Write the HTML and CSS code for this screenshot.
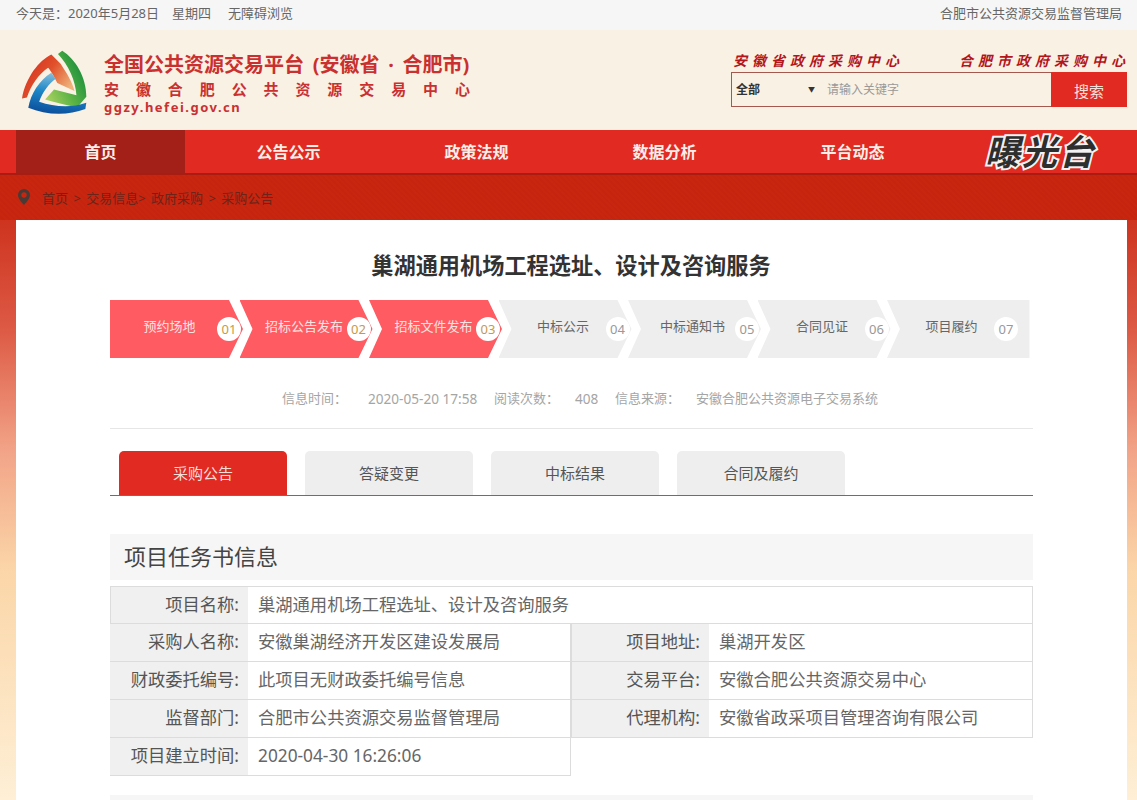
FILE: index.html
```html
<!DOCTYPE html>
<html lang="zh-CN">
<head>
    <meta charset="UTF-8">
    <title>巢湖通用机场工程选址、设计及咨询服务</title>
    <link rel="stylesheet" href="styles.css">
</head>
<body>
    <!-- Top bar -->
    <div class="top-bar">
        <div class="top-left">
            <span>今天是：2020年5月28日</span>
            <span>星期四</span>
            <span>无障碍浏览</span>
        </div>
        <div>合肥市公共资源交易监督管理局</div>
    </div>

    <!-- Header -->
    <div class="header">
        <div class="brand">
            <svg class="logo" viewBox="30 28 200 194">
                <defs>
                    <linearGradient id="redGrad" x1="0" y1="0" x2="1" y2="0.6">
                        <stop offset="0" stop-color="#d3261f"/>
                        <stop offset="0.55" stop-color="#e0502a"/>
                        <stop offset="1" stop-color="#eeb27a"/>
                    </linearGradient>
                    <linearGradient id="greenGrad" x1="0" y1="1" x2="1" y2="0.3">
                        <stop offset="0" stop-color="#b9d766"/>
                        <stop offset="0.5" stop-color="#5db445"/>
                        <stop offset="1" stop-color="#128a3c"/>
                    </linearGradient>
                    <linearGradient id="blueGrad" x1="0.6" y1="0" x2="0.4" y2="1">
                        <stop offset="0" stop-color="#8fc4df"/>
                        <stop offset="0.5" stop-color="#1c86c6"/>
                        <stop offset="1" stop-color="#0c4f9c"/>
                    </linearGradient>
                </defs>
                <path fill="url(#redGrad)" d="M122 42 L150 70 C170 100 185 125 192 152 L140 128 C128 105 120 90 112 82 C85 100 60 135 48 172 L33 175 C45 110 85 60 122 42Z"/>
                <path fill="url(#greenGrad)" d="M142 40 L155 30 C195 55 228 110 228 170 L200 202 C165 195 130 185 103 178 L130 148 L198 165 C195 120 175 75 142 40Z"/>
                <path fill="url(#blueGrad)" d="M122 97 L135 115 C115 130 95 155 85 185 C130 200 180 205 228 188 L225 207 C170 228 105 225 52 203 C60 160 85 120 122 97Z"/>
            </svg>
            <div class="brand-text">
                <div class="brand-title">全国公共资源交易平台 (安徽省 · 合肥市)</div>
                <div class="brand-sub">
                    <span>安</span><span>徽</span><span>合</span><span>肥</span><span>公</span><span>共</span><span>资</span><span>源</span><span>交</span><span>易</span><span>中</span><span>心</span>
                </div>
                <div class="brand-url">ggzy.hefei.gov.cn</div>
            </div>
        </div>
        <div class="header-right">
            <div class="centers">
                <a>安徽省政府采购中心</a>
                <a>合肥市政府采购中心</a>
            </div>
            <div class="search-box">
                <div class="search-select">全部<span class="search-arrow">▼</span></div>
                <div class="search-input">请输入关键字</div>
                <div class="search-btn">搜索</div>
            </div>
        </div>
    </div>

    <!-- Nav -->
    <div class="nav">
        <a class="nav-item active">首页</a>
        <a class="nav-item">公告公示</a>
        <a class="nav-item">政策法规</a>
        <a class="nav-item">数据分析</a>
        <a class="nav-item">平台动态</a>
        <a class="nav-item nav-exposure">曝光台</a>
    </div>

    <!-- Breadcrumb -->
    <div class="crumbs">
        <svg class="pin" viewBox="0 0 12 16">
            <path fill="#4a3a36" fill-rule="evenodd" d="M6 0a6 6 0 0 1 6 6c0 3.6-3.6 7.4-6 10C3.6 13.4 0 9.6 0 6a6 6 0 0 1 6-6zm0 3.3a2.7 2.7 0 1 0 0 5.4 2.7 2.7 0 0 0 0-5.4z"/>
        </svg>
        <span>首页 &gt; 交易信息&gt; 政府采购 &gt; 采购公告</span>
    </div>

    <!-- Main card -->
    <div class="card">
        <h1>巢湖通用机场工程选址、设计及咨询服务</h1>

        <div class="steps">
            <div class="step first done"><span class="step-name">预约场地</span><span class="step-num">01</span></div>
            <div class="step done"><span class="step-name">招标公告发布</span><span class="step-num">02</span></div>
            <div class="step done"><span class="step-name">招标文件发布</span><span class="step-num">03</span></div>
            <div class="step"><span class="step-name">中标公示</span><span class="step-num">04</span></div>
            <div class="step"><span class="step-name">中标通知书</span><span class="step-num">05</span></div>
            <div class="step"><span class="step-name">合同见证</span><span class="step-num">06</span></div>
            <div class="step last"><span class="step-name">项目履约</span><span class="step-num">07</span></div>
        </div>

        <div class="info-row">
            <span class="info-label">信息时间：</span>
            <span class="info-time">2020-05-20 17:58</span>
            <span class="info-label">阅读次数：</span>
            <span class="info-count">408</span>
            <span class="info-label">信息来源：</span>
            <span>安徽合肥公共资源电子交易系统</span>
        </div>

        <div class="tabs">
            <a class="tab active">采购公告</a>
            <a class="tab">答疑变更</a>
            <a class="tab">中标结果</a>
            <a class="tab">合同及履约</a>
        </div>

        <h2 class="section-title">项目任务书信息</h2>
        <div class="info-table">
            <div class="cell-label">项目名称:</div>
            <div class="cell-value span-3">巢湖通用机场工程选址、设计及咨询服务</div>
            <div class="cell-label">采购人名称:</div>
            <div class="cell-value">安徽巢湖经济开发区建设发展局</div>
            <div class="cell-label">项目地址:</div>
            <div class="cell-value">巢湖开发区</div>
            <div class="cell-label">财政委托编号:</div>
            <div class="cell-value">此项目无财政委托编号信息</div>
            <div class="cell-label">交易平台:</div>
            <div class="cell-value">安徽合肥公共资源交易中心</div>
            <div class="cell-label">监督部门:</div>
            <div class="cell-value">合肥市公共资源交易监督管理局</div>
            <div class="cell-label">代理机构:</div>
            <div class="cell-value">安徽省政采项目管理咨询有限公司</div>
            <div class="cell-label">项目建立时间:</div>
            <div class="cell-value">2020-04-30 16:26:06</div>
        </div>

        <div class="next-section"></div>
    </div>
</body>
</html>
```

FILE: styles.css
```css
/* Global */
html, body {
    height: 800px;
    overflow: hidden;
}

body {
    margin: 0;
    font-family: "Noto Sans", "Noto Sans CJK SC", sans-serif;
    font-size: 13px;
    color: #555;
    background: linear-gradient(180deg, #c8240f 175px, #dd5a45 330px, #f2a488 451px, #fbd6a8 571px, #feefd6 800px);
}

/* Top bar */
.top-bar {
    height: 30px;
    line-height: 27px;
    padding: 0 15px 0 16px;
    background: #f6f6f6;
    display: flex;
    justify-content: space-between;
    font-size: 13px;
    color: #666;
}

.top-left {
    display: flex;
    gap: 13px;
}

.top-left span:last-child {
    margin-left: 4px;
}

/* Header */
.header {
    height: 100px;
    background: #f9f1e4;
    display: flex;
    justify-content: space-between;
    padding: 0 10px 0 21px;
}

.brand {
    display: flex;
    gap: 17px;
    padding-top: 20px;
}

.logo {
    width: 66px;
    height: 64px;
}

.brand-text {
    width: 366px;
    color: #c9302f;
    font-weight: 700;
}

.brand-title {
    font-size: 20px;
    line-height: 28px;
    white-space: nowrap;
    word-spacing: 3.5px;
    margin-top: 1px;
}

.brand-sub {
    display: flex;
    justify-content: space-between;
    font-size: 15px;
    line-height: 18px;
    margin-top: 1px;
}

.brand-url {
    font-size: 13px;
    line-height: 16px;
    letter-spacing: 1.5px;
    margin-top: 1px;
}

.header-right {
    width: 396px;
    padding-top: 21px;
}

.centers {
    display: flex;
    justify-content: space-between;
    font-size: 14px;
    line-height: 20px;
    font-weight: 700;
    letter-spacing: 5px;
    color: #b3151c;
    margin-right: -3px;
    padding-left: 2px;
}

.centers a {
    display: block;
    font-style: italic;
    white-space: nowrap;
}

.search-box {
    height: 35px;
    margin-top: 1px;
    box-sizing: border-box;
    border: 1px solid #a5584e;
    display: flex;
    line-height: 33px;
}

.search-select {
    width: 95px;
    box-sizing: border-box;
    padding-left: 4px;
    font-size: 12px;
    font-weight: 700;
    color: #333;
    display: flex;
    justify-content: space-between;
}

.search-arrow {
    font-size: 7px;
    padding-right: 12px;
    color: #333;
}

.search-input {
    flex: 1;
    font-size: 12px;
    color: #999;
}

.search-btn {
    width: 76px;
    margin: -1px -1px -1px 0;
    line-height: 38px;
    background: #e12a22;
    color: #f5e0dc;
    font-size: 15px;
    text-align: center;
}

/* Nav */
.nav {
    height: 45px;
    background: #e12a22;
    border-bottom: 2px solid #a81c12;
    box-sizing: border-box;
    padding-left: 16px;
    display: flex;
    gap: 19px;
}

.nav-item {
    width: 169px;
    line-height: 45px;
    text-align: center;
    color: #fbeee8;
    font-size: 16px;
    font-weight: 700;
}

.nav-item.active {
    background: #a32018;
}

.nav-exposure {
    font-size: 35px;
    line-height: 43px;
    font-style: italic;
    color: #2e2e2e;
    letter-spacing: 2px;
    -webkit-text-stroke: 4px #f2f2f2;
    paint-order: stroke fill;
}

/* Breadcrumb */
.crumbs {
    height: 45px;
    padding-left: 18px;
    display: flex;
    align-items: center;
    gap: 12px;
    font-size: 13px;
    word-spacing: 2px;
    color: #6b241a;
    background: repeating-linear-gradient(45deg, #c9260f 0 2px, #c6240f 2px 4px);
}

.pin {
    width: 12px;
    height: 16px;
    margin-top: -1px;
}

/* Card */
.card {
    margin: 0 10px 0 16px;
    height: 580px;
    background: #fff;
    padding: 0 94px;
    box-sizing: border-box;
}

h1 {
    margin: 0;
    padding-top: 31px;
    width: 922px;
    text-align: center;
    font-size: 22.2px;
    line-height: 30px;
    font-weight: 700;
    color: #333;
}

/* Steps */
.steps {
    margin-top: 19px;
    width: 920px;
    display: flex;
}

.step {
    width: 133px;
    height: 58px;
    margin-right: -3.5px;
    box-sizing: border-box;
    padding-left: 22px;
    display: flex;
    align-items: center;
    flex-shrink: 0;
    background: #eeeeee;
    color: #666;
    clip-path: polygon(0 0, 119px 0, 100% 50%, 119px 100%, 0 100%, 13px 50%);
}

.step.first {
    padding-left: 12px;
    clip-path: polygon(0 0, 119px 0, 100% 50%, 119px 100%, 0 100%);
}

.step.last {
    width: 142.5px;
    margin-right: 0;
    clip-path: polygon(0 0, 100% 0, 100% 100%, 0 100%, 13px 50%);
}

.step.done {
    background: #ff5b63;
    color: #fbe3e0;
}

.step-name {
    width: 85px;
    text-align: center;
    font-size: 13px;
    white-space: nowrap;
    margin-top: -7px;
}

.step.first .step-name {
    width: 95px;
}

.step-num {
    width: 24px;
    height: 24px;
    border-radius: 50%;
    background: #fff;
    text-align: center;
    line-height: 24px;
    font-size: 13px;
    color: #999;
    flex-shrink: 0;
}

.step.done .step-num {
    color: #c79a4a;
}

/* Info row */
.info-row {
    width: 923px;
    height: 71px;
    box-sizing: border-box;
    border-bottom: 1px solid #e6e6e6;
    padding-left: 172px;
    line-height: 81px;
    font-size: 13px;
    color: #a5a5a5;
    display: flex;
}

.info-label {
    width: 86px;
    flex-shrink: 0;
}

.info-time {
    width: 126px;
    flex-shrink: 0;
    font-size: 13.6px;
}

.info-count {
    width: 40px;
    font-size: 13.6px;
}

.info-row .info-label:nth-child(3),
.info-row .info-label:nth-child(5) {
    width: 81px;
}

/* Tabs */
.tabs {
    width: 923px;
    margin-top: 22px;
    padding-left: 9px;
    box-sizing: border-box;
    border-bottom: 1px solid #a6574e;
    display: flex;
    gap: 18px;
}

.tab {
    width: 168px;
    height: 44px;
    line-height: 44px;
    text-align: center;
    font-size: 15px;
    background: #eeeeee;
    color: #555;
    border-radius: 5px 5px 0 0;
}

.tab.active {
    background: #e12a22;
    color: #f8ded9;
}

/* Section */
.section-title {
    width: 923px;
    height: 46px;
    box-sizing: border-box;
    margin: 38px 0 0;
    padding-left: 14px;
    font-size: 22px;
    font-weight: 400;
    line-height: 45px;
    color: #444;
    background: #f6f6f6;
}

.info-table {
    width: 923px;
    margin-top: 6px;
    display: grid;
    grid-template-columns: 138px 323px 138px 324px;
    grid-auto-rows: 38px;
    font-size: 17.3px;
    line-height: 36px;
    color: #666;
}

.cell-label {
    background: #f0f0f0;
    border: 1px solid #dcdcdc;
    border-width: 0 0 1px 0;
    text-align: right;
    padding-right: 9px;
    color: #555;
    white-space: nowrap;
}

.cell-label:nth-child(4n+1) {
    border-left-width: 1px;
}

.cell-value {
    border: 1px solid #dcdcdc;
    border-width: 0 1px 1px 0;
    padding-left: 10px;
    white-space: nowrap;
}

.span-3 {
    grid-column: span 3;
    border-top-width: 1px;
}

.cell-label:first-child {
    border-top-width: 1px;
}

.next-section {
    width: 923px;
    height: 30px;
    margin-top: 19px;
    background: #f6f6f6;
}
```
